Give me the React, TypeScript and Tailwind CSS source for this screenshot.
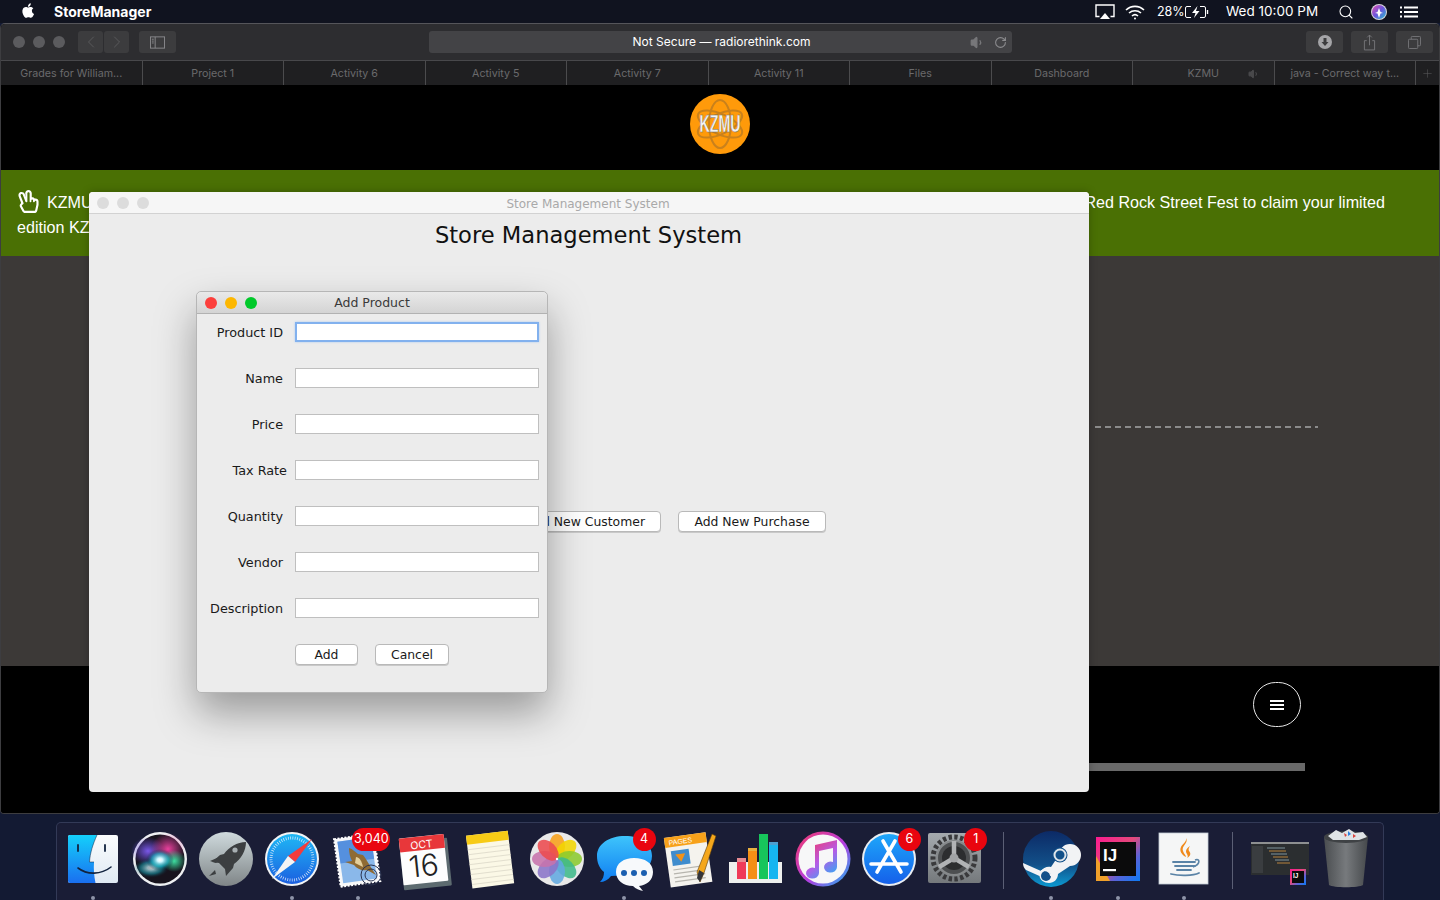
import React from "react";
import { FaRegHandPeace } from "react-icons/fa";
import { ChevronLeft, ChevronRight, Search, RotateCw, Volume1, Plus } from "lucide-react";

const tabs = ["Grades for William...", "Project 1", "Activity 6", "Activity 5", "Activity 7", "Activity 11", "Files", "Dashboard", "KZMU", "java - Correct way t..."];

const Svg = ({ children }: { children: React.ReactNode }) => (
  <svg viewBox="0 0 66 66" width="66" height="66" className="block">{children}</svg>
);

const Finder = () => (
  <Svg>
    <defs>
      <linearGradient id="fa" x1="0" y1="0" x2="0" y2="1"><stop offset="0" stopColor="#14d0fb" /><stop offset="1" stopColor="#1a6ff0" /></linearGradient>
      <linearGradient id="fb" x1="0" y1="0" x2="0" y2="1"><stop offset="0" stopColor="#fbfcfd" /><stop offset="1" stopColor="#dfe9f3" /></linearGradient>
    </defs>
    <rect x="8" y="9" width="50" height="48" rx="2" fill="url(#fb)" />
    <path d="M10 9H37C33 18 30 27 29.5 36H34C33.5 43 34 50 35.5 57H10a2 2 0 0 1-2-2V11a2 2 0 0 1 2-2z" fill="url(#fa)" />
    <path d="M18 19v6M45 19v6" stroke="#12233f" strokeWidth="1.8" strokeLinecap="round" />
    <path d="M18 42c9 7 23 7 33-1" stroke="#12233f" strokeWidth="1.6" fill="none" strokeLinecap="round" />
    <path d="M37 9C33 18 30 27 29.5 36H34" stroke="#12233f" strokeWidth="1" fill="none" opacity="0.5" />
  </Svg>
);

const Siri = () => (
  <Svg>
    <defs>
      <radialGradient id="sa"><stop offset="0" stopColor="#ffffff" /><stop offset="0.2" stopColor="#c8f6ff" /><stop offset="0.6" stopColor="#16b6c8" stopOpacity="0.65" /><stop offset="1" stopColor="#0a1a2a" stopOpacity="0" /></radialGradient>
      <radialGradient id="sb"><stop offset="0" stopColor="#e8409c" /><stop offset="1" stopColor="#e0409c" stopOpacity="0" /></radialGradient>
      <radialGradient id="sc"><stop offset="0" stopColor="#7a58e8" /><stop offset="1" stopColor="#6a4ee0" stopOpacity="0" /></radialGradient>
      <radialGradient id="sd"><stop offset="0" stopColor="#3ce0a0" /><stop offset="1" stopColor="#3ce0a0" stopOpacity="0" /></radialGradient>
    </defs>
    <circle cx="34" cy="33" r="27" fill="#eef0f2" />
    <circle cx="34" cy="33" r="24.5" fill="#17131d" />
    <ellipse cx="22" cy="25" rx="17" ry="14" fill="url(#sc)" />
    <ellipse cx="42" cy="23" rx="17" ry="16" fill="url(#sb)" />
    <ellipse cx="48" cy="35" rx="12" ry="11" fill="url(#sd)" />
    <ellipse cx="25" cy="42" rx="18" ry="10" fill="url(#sa)" opacity="0.7" />
    <ellipse cx="34" cy="34" rx="14" ry="11" fill="url(#sa)" />
  </Svg>
);

const Launchpad = () => (
  <Svg>
    <defs><linearGradient id="la" x1="0" y1="0" x2="0" y2="1"><stop offset="0" stopColor="#cfdadd" /><stop offset="1" stopColor="#7f8587" /></linearGradient></defs>
    <circle cx="33" cy="33" r="27" fill="url(#la)" />
    <path d="M53 16c-9 0-17 5-22 12l-4 1-8 7 7 1 6 6 1 7 7-8 1-4c7-5 12-13 12-22z" fill="#3c3f41" />
    <path d="M28 33l-4-1-7 3 6 2zM22 44l-6 6 7-2z" fill="#3c3f41" />
    <circle cx="42" cy="24" r="2.6" fill="#a7afb2" />
  </Svg>
);

const SafariIcon = () => (
  <Svg>
    <defs><linearGradient id="ca" x1="0" y1="0" x2="0" y2="1"><stop offset="0" stopColor="#1fb8f5" /><stop offset="1" stopColor="#1b5fe0" /></linearGradient></defs>
    <circle cx="33" cy="33" r="27" fill="#f2f4f5" />
    <circle cx="33" cy="33" r="25" fill="url(#ca)" />
    <circle cx="33" cy="33" r="21" fill="none" stroke="#fff" strokeWidth="3" strokeDasharray="0.7 1.6" opacity="0.85" />
    <path d="M53 13L29 30l7 6z" fill="#f23c3c" />
    <path d="M13 53l16-23 7 6z" fill="#f4f4f4" />
  </Svg>
);

const Mail = () => (
  <Svg>
    <g transform="rotate(-8 33 33)">
      <rect x="12" y="10" width="40" height="48" fill="#f6f7f8" stroke="#fff" strokeDasharray="2 1.5" strokeWidth="2" />
      <rect x="15" y="13" width="34" height="42" fill="#8ab8ea" />
      <path d="M15 13h34v22H15z" fill="#3f7fd8" opacity="0.7" />
    </g>
    <path d="M24 22c4 1 6 4 9 6l5 1c4 5 8 13 13 20l-9-5c-5 1-10-1-13-5l-9-3 7-1c-2-4-3-8-3-13z" fill="#8f6b34" />
    <path d="M31 31c3 0 6 4 7 10l-8-4z" fill="#e3cf9c" />
    <circle cx="46" cy="49" r="10" fill="none" stroke="#2a3350" strokeWidth="1" />
    <circle cx="46" cy="49" r="6" fill="none" stroke="#2a3350" strokeWidth="1" />
  </Svg>
);

const Calendar = () => (
  <Svg>
    <g transform="rotate(-6 33 33)">
      <rect x="9" y="14" width="48" height="48" rx="1" fill="#5d6b70" />
      <rect x="9" y="10" width="45" height="47" rx="1" fill="#fdfdfd" />
      <rect x="9" y="10" width="45" height="14" fill="#e8373a" />
      <text x="31" y="22" textAnchor="middle" fontFamily="Inter, sans-serif" fontSize="10.5" fill="#fff">OCT</text>
      <text x="31" y="50" textAnchor="middle" fontFamily="Inter, sans-serif" fontWeight="300" fontSize="30" fill="#222">16</text>
    </g>
  </Svg>
);

const Notes = () => (
  <Svg>
    <g transform="rotate(-7 33 33)">
      <rect x="11" y="7" width="42" height="53" fill="#fbf8e6" />
      <rect x="11" y="7" width="42" height="9" fill="#f7cb16" />
      {[21, 26, 31, 36, 41, 46, 51, 56].map((y) => <path key={y} d={`M11 ${y}H53`} stroke="#dcd9c9" strokeWidth="0.8" />)}
    </g>
  </Svg>
);

const Photos = () => {
  const cs = ["#f7a11a", "#f3d500", "#8bc92f", "#3fb98a", "#62a8e0", "#8a74c8", "#c773ac", "#ec4a4e"];
  return (
    <Svg>
      <circle cx="33" cy="33" r="27" fill="#e9e9e9" />
      {cs.map((c, i) => (
        <ellipse key={c} cx="33" cy="20.5" rx="8" ry="12.5" fill={c} opacity="0.88" transform={`rotate(${i * 45} 33 33)`} />
      ))}
      <circle cx="33" cy="33" r="1.2" fill="#fff" />
    </Svg>
  );
};

const Messages = () => (
  <Svg>
    <defs><linearGradient id="ma" x1="0" y1="0" x2="0" y2="1"><stop offset="0" stopColor="#3ec4fb" /><stop offset="1" stopColor="#0f7df2" /></linearGradient></defs>
    <path d="M34 10c16 0 27 8 27 20 0 10-9 18-20 19L20 50c-3 4-7 6-11 6 3-3 4-6 4-10C8 42 6 36 6 30 6 18 18 10 34 10z" fill="url(#ma)" />
    <path d="M43 32c11 0 19 5 19 14 0 8-6 13-14 14l4 5c-4-1-7-2-10-5-10 0-17-6-17-14 0-9 8-14 18-14z" fill="#f7f9fb" />
    <circle cx="33" cy="47" r="3" fill="#1b5fb0" /><circle cx="43" cy="47" r="3" fill="#1b5fb0" /><circle cx="53" cy="47" r="3" fill="#1b5fb0" />
  </Svg>
);

const Pages = () => (
  <Svg>
    <g transform="rotate(-8 30 33)">
      <rect x="10" y="9" width="42" height="50" fill="#f5f3ee" />
      <rect x="10" y="9" width="42" height="10" fill="#f7a11a" />
      <text x="14" y="17" fontFamily="'Liberation Sans', sans-serif" fontSize="7" fill="#fff">PAGES</text>
      <rect x="15" y="23" width="18" height="15" fill="#3f8ccd" />
      <path d="M19 27h10l-5 8z" fill="#f39218" />
      {[42, 46, 50, 54].map((y) => <path key={y} d={`M15 ${y}H46`} stroke="#b7b5ae" strokeWidth="1.2" />)}
    </g>
    <path d="M55 8l4 2-12 37-4 9-3-10z" fill="#f5a71c" stroke="#5b3a0a" strokeWidth="0.6" />
    <path d="M42 44l5 3-4 9-3-4z" fill="#34353a" />
  </Svg>
);

const Numbers = () => (
  <Svg>
    <path d="M6 36h53v21H6z" fill="#eef0ee" />
    <rect x="14" y="36" width="9" height="17" fill="#ef3a58" /><rect x="14" y="32" width="9" height="4" fill="#e88a92" />
    <rect x="25" y="25" width="9" height="28" fill="#f58f15" /><rect x="25" y="22" width="9" height="3" fill="#e8b040" />
    <rect x="36" y="8" width="9" height="45" fill="#17c55b" />
    <rect x="46" y="18" width="9" height="35" fill="#16b5f0" /><rect x="46" y="16" width="9" height="3" fill="#4d9fd0" />
  </Svg>
);

const ITunes = () => (
  <Svg>
    <defs>
      <linearGradient id="ia" x1="0" y1="0" x2="1" y2="1"><stop offset="0" stopColor="#f43a6a" /><stop offset="0.55" stopColor="#b53ee0" /><stop offset="1" stopColor="#18b8f0" /></linearGradient>
      <linearGradient id="ib" x1="0" y1="0" x2="0.6" y2="1"><stop offset="0" stopColor="#f7345e" /><stop offset="0.6" stopColor="#b65be6" /><stop offset="1" stopColor="#4a9bf2" /></linearGradient>
    </defs>
    <circle cx="33" cy="33" r="27.5" fill="url(#ia)" />
    <circle cx="33" cy="33" r="24.5" fill="#f7f7f8" />
    <path d="M25 19l22-5v27a6.5 5.5 0 1 1-4-5V22l-14 3v22a6.5 5.5 0 1 1-4-5z" fill="url(#ib)" />
  </Svg>
);

const AppStore = () => (
  <Svg>
    <defs><linearGradient id="aa" x1="0" y1="0" x2="0" y2="1"><stop offset="0" stopColor="#1ea7fa" /><stop offset="1" stopColor="#1560ea" /></linearGradient></defs>
    <circle cx="33" cy="33" r="27" fill="#e9edf2" />
    <circle cx="33" cy="33" r="25" fill="url(#aa)" />
    <path d="M27 15l18 31M39 15L21 46M15 38h36" stroke="#fff" strokeWidth="3.6" strokeLinecap="round" fill="none" />
  </Svg>
);

const SysPrefs = () => (
  <Svg>
    <defs><linearGradient id="pa" x1="0" y1="0" x2="0" y2="1"><stop offset="0" stopColor="#a5aaae" /><stop offset="1" stopColor="#75797c" /></linearGradient></defs>
    <rect x="6" y="7" width="53" height="50" rx="2" fill="url(#pa)" />
    <circle cx="32" cy="32" r="21" fill="none" stroke="#3a3a3c" strokeWidth="5" strokeDasharray="3.4 2.4" />
    <circle cx="32" cy="32" r="17" fill="#4d4f51" stroke="#86898b" strokeWidth="2" />
    <circle cx="32" cy="32" r="12" fill="#2c2d2f" />
    <path d="M32 32V15M32 32L17 41M32 32L47 41" stroke="#b1b3b5" strokeWidth="4.5" />
    <circle cx="32" cy="32" r="4.5" fill="#a1a3a5" />
  </Svg>
);

const Steam = () => (
  <Svg>
    <defs><linearGradient id="ta" x1="0" y1="0" x2="0" y2="1"><stop offset="0" stopColor="#0c2a66" /><stop offset="0.6" stopColor="#125089" /><stop offset="1" stopColor="#0c9ad2" /></linearGradient></defs>
    <circle cx="33" cy="33" r="28" fill="url(#ta)" />
    <path d="M5 37l18 8c2-3 6-5 10-4l8-12a11 11 0 1 1 11 11l-12 8c0 5-4 9-9 9s-9-3-9.500-7L8 44c-2-2-3-4-3-7z" fill="#f2f3f5" />
    <circle cx="42" cy="29" r="7.500" fill="#125089" />
    <circle cx="42" cy="29" r="5.500" fill="none" stroke="#dfe5ea" strokeWidth="2" />
    <circle cx="28" cy="50" r="5" fill="#125089" /><path d="M23 45c4-2 9 0 10 5" fill="none" stroke="#f2f3f5" strokeWidth="1.400" />
  </Svg>
);

const IJ = () => (
  <Svg>
    <defs><linearGradient id="ja" x1="0" y1="0" x2="1" y2="1"><stop offset="0" stopColor="#fc1a8f" /><stop offset="0.45" stopColor="#e34a7c" /><stop offset="0.7" stopColor="#5a63d8" /><stop offset="1" stopColor="#0a7bf5" /></linearGradient></defs>
    <rect x="11" y="11" width="44" height="44" fill="url(#ja)" />
    <path d="M11 30v25h14z" fill="#f0a02a" />
    <rect x="15" y="16" width="36" height="34" fill="#0b0b0c" />
    <text x="18" y="35" fontFamily="'Liberation Sans', sans-serif" fontWeight="700" fontSize="17" fill="#fff">IJ</text>
    <rect x="18" y="43" width="13" height="2.200" fill="#fff" />
  </Svg>
);

const Java = () => (
  <Svg>
    <rect x="8" y="7" width="49" height="51" fill="#f5f6f6" stroke="#c4cdd6" strokeWidth="0.8" />
    <path d="M35 12c3 5-5 8-3 13 1 3 3 4 3 6-4-2-7-6-5-10 1-3 6-5 5-9z" fill="#f08a1c" />
    <path d="M39 20c-4 3-5 5-3 8 1 2 1 3 0 4 4-2 4-5 2-7-1-2 0-3 1-5z" fill="#f08a1c" />
    <path d="M22 36h22M24 40h20M26 44h14M20 48c8 2 22 2 28-1" stroke="#5a83a6" strokeWidth="1.800" fill="none" strokeLinecap="round" />
    <path d="M44 34c5-2 6 4-2 7" stroke="#5a83a6" strokeWidth="1.600" fill="none" />
  </Svg>
);

const Thumb = () => (
  <Svg>
    <rect x="4" y="16" width="58" height="33" fill="#2b2e30" />
    <rect x="4" y="16" width="58" height="2" fill="#8e9091" />
    <rect x="5" y="20" width="11" height="27" fill="#3a3d40" />
    {[22, 25, 28, 31, 34, 37].map((y, i) => <path key={y} d={`M${20 + i * 2} ${y}h${18 - i}`} stroke={i % 2 ? "#c98c3f" : "#8aa0a8"} strokeWidth="0.9" />)}
    <rect x="43" y="43" width="16" height="16" fill="url(#ja)" />
    <rect x="45" y="45" width="12" height="12" fill="#0b0b0c" />
    <text x="46" y="52" fontFamily="'Liberation Sans', sans-serif" fontWeight="700" fontSize="6.500" fill="#fff">IJ</text>
  </Svg>
);

const Trash = () => (
  <Svg>
    <defs><linearGradient id="ra" x1="0" y1="0" x2="1" y2="0"><stop offset="0" stopColor="#4a4d50" /><stop offset="0.5" stopColor="#777a7d" /><stop offset="1" stopColor="#45484b" /></linearGradient></defs>
    <path d="M11 11h44l-5 48c-4 3-30 3-34 0z" fill="url(#ra)" />
    <ellipse cx="33" cy="11" rx="22" ry="6" fill="#3f4245" />
    <path d="M15 10l8-6 6 3 7-4 6 4 8-1 4 5-8 3H20z" fill="#dfe3e6" />
    <path d="M31 7l3 2-2 2zM40 8l3 2-3 2z" fill="#d9423c" />
    <path d="M35 5l3 3-3 2z" fill="#2d7fe0" />
  </Svg>
);

const dock: { el: React.ReactNode; dot?: boolean; badge?: string; sep?: boolean; wide?: boolean }[] = [
  { el: <Finder />, dot: true },
  { el: <Siri /> },
  { el: <Launchpad /> },
  { el: <SafariIcon />, dot: true },
  { el: <Mail />, dot: true, badge: "3,040", wide: true },
  { el: <Calendar /> },
  { el: <Notes /> },
  { el: <Photos /> },
  { el: <Messages />, dot: true, badge: "4" },
  { el: <Pages /> },
  { el: <Numbers /> },
  { el: <ITunes /> },
  { el: <AppStore />, badge: "6" },
  { el: <SysPrefs />, badge: "1" },
  { sep: true, el: null },
  { el: <Steam />, dot: true },
  { el: <IJ />, dot: true },
  { el: <Java />, dot: true },
  { sep: true, el: null },
  { el: <Thumb /> },
  { el: <Trash /> },
];

const ToolBtn = ({ children, w = "w-[37px]" }: { children: React.ReactNode; w?: string }) => (
  <div className={`${w} h-[22px] rounded-[3px] bg-[#3c3c3e] flex items-center justify-center`}>{children}</div>
);

const Row = ({ label, focus, shift }: { label: string; focus?: boolean; shift?: boolean }) => (
  <div className="h-[46px] flex">
    <div className={`w-[79px] h-[20px] flex items-center justify-end pt-[2px] text-[12.800px] text-[#1a1a1a] whitespace-nowrap ${shift ? "" : "pr-[4px]"}`}>{label}</div>
    <div className={`ml-[8px] w-[244px] h-[20px] bg-white ${focus ? "border-2 border-[#82b1ee] shadow-[0_0_2px_#a9c9f3]" : "border border-[#bfbfbf]"}`} />
  </div>
);

const JBtn = ({ children, w }: { children: React.ReactNode; w: string }) => (
  <div className={`${w} h-[21px] bg-white rounded-[4px] border border-[#b9b9b9] shadow-[0_1px_0_#c9c9c9] flex items-center justify-center pt-[2px] text-[12.400px] text-[#1a1a1a] whitespace-nowrap`}>{children}</div>
);

export default function App() {
  return (
    <div className="w-[1440px] h-[900px] overflow-hidden bg-[#131a33] flex flex-col relative font-['Inter',sans-serif]">
      {/* menu bar */}
      <div className="h-[23px] shrink-0 bg-[#10131f] text-white flex items-center pl-[21px] pr-[22px] text-[14px]">
        <svg viewBox="0 0 20 24" width="14" height="17" fill="#fff" className="-mt-[2px]">
          <path d="M15.500 12.600c0-2.500 2-3.600 2.100-3.700-1.200-1.700-3-1.900-3.600-2-1.500-.2-3 .9-3.800.9s-2-.9-3.300-.9C5.200 7 3.600 8 2.800 9.500c-1.800 3.100-.5 7.700 1.300 10.200.9 1.200 1.900 2.600 3.200 2.600 1.300-.1 1.800-.8 3.400-.8s2 .8 3.400.8 2.300-1.300 3.100-2.500c1-1.400 1.400-2.800 1.400-2.900-.1 0-2.900-1.100-3-4.300zM13 5.100c.7-.9 1.200-2.100 1-3.300-1 .1-2.300.7-3 1.600-.7.800-1.200 2-1.100 3.200 1.200.1 2.400-.6 3.100-1.500z" />
        </svg>
        <span className="ml-[19px] font-bold text-[14px] whitespace-nowrap">StoreManager</span>
        <div className="flex-1" />
        <svg viewBox="0 0 20 16" width="20" height="16" className="mr-[10px]" fill="none" stroke="#fff" strokeWidth="1.400">
          <path d="M4.500 12.500H1V1h18v11.500h-3.500" /><path d="M10 9l5 6H5z" fill="#fff" stroke="none" />
        </svg>
        <svg viewBox="0 0 20 16" width="20" height="16" fill="none" stroke="#fff" strokeWidth="1.600" className="mr-[12px]">
          <path d="M1 6a13 13 0 0 1 18 0M4 9a9 9 0 0 1 12 0M7 12a4.500 4.500 0 0 1 6 0" /><circle cx="10" cy="14.500" r="1" fill="#fff" stroke="none" />
        </svg>
        <span className="text-[12.500px] w-[28px] whitespace-nowrap pt-[1px]">28%</span>
        <svg viewBox="0 0 24 12" width="24" height="12" fill="none" stroke="#fff" strokeWidth="1" className="mr-[17px]">
          <path d="M6 .5H2A1.500 1.500 0 0 0 .5 2v8A1.500 1.500 0 0 0 2 11.500h4M15 .5h4A1.500 1.500 0 0 1 20.500 2v8a1.500 1.500 0 0 1-1.500 1.500h-4" /><path d="M12.500 0L7 7h3.500L9 12l5.500-7H11z" fill="#fff" stroke="none" /><path d="M22.500 4v4" strokeWidth="1.400" />
        </svg>
        <span className="text-[13.500px] w-[93px] whitespace-nowrap">Wed 10:00 PM</span>
        <Search size={16} strokeWidth={1.600} className="ml-[19px]" />
        <svg viewBox="0 0 16 16" width="16" height="16" className="ml-[17px]">
          <defs>
            <linearGradient id="mb" x1="0" y1="0" x2="1" y2="1"><stop offset="0" stopColor="#e64fb0" /><stop offset="0.5" stopColor="#6a55dd" /><stop offset="1" stopColor="#27c1cf" /></linearGradient>
          </defs>
          <circle cx="8" cy="8" r="8" fill="#d8d8dd" /><circle cx="8" cy="8" r="7" fill="url(#mb)" /><path d="M8 4l1.500 4 2.500 1-2.500.5L8 14 6.500 9.500 4 9l2.500-1z" fill="#fff" />
        </svg>
        <svg viewBox="0 0 18 12" width="18" height="12" className="ml-[13px]" fill="#fff">
          <rect x="0" y="0.500" width="2" height="2" /><rect x="4" y="0.500" width="14" height="2" />
          <rect x="0" y="5" width="2" height="2" /><rect x="4" y="5" width="14" height="2" />
          <rect x="0" y="9.500" width="2" height="2" /><rect x="4" y="9.500" width="14" height="2" />
        </svg>
      </div>

      {/* browser window */}
      <div className="h-[791px] shrink-0 rounded-t-[5px] rounded-b-[4px] border border-[#3d3d40] border-t-[#55555a] flex flex-col overflow-hidden bg-black">
        <div className="h-[37px] shrink-0 bg-[#2d2d30] flex items-center pl-[12px] pr-[6px] border-b border-[#48484b]">
          <div className="w-[12px] h-[12px] rounded-full bg-[#5b5b5e]" />
          <div className="ml-[8px] w-[12px] h-[12px] rounded-full bg-[#5b5b5e]" />
          <div className="ml-[8px] w-[12px] h-[12px] rounded-full bg-[#5b5b5e]" />
          <div className="ml-[13px] flex gap-[1px]">
            <ToolBtn w="w-[25px]"><ChevronLeft size={20} strokeWidth={1} className="text-[#5f5f62]" /></ToolBtn>
            <ToolBtn w="w-[25px]"><ChevronRight size={20} strokeWidth={1} className="text-[#5f5f62]" /></ToolBtn>
          </div>
          <div className="ml-[10px]">
            <ToolBtn>
              <svg viewBox="0 0 16 13" width="15" height="13" fill="none" stroke="#8a8a8d" strokeWidth="1"><rect x="0.500" y="0.500" width="15" height="12" /><path d="M5.500 0.500v12" /><path d="M2 3h2M2 5h2M2 7h2" /></svg>
            </ToolBtn>
          </div>
          <div className="ml-[253px] w-[583px] h-[22px] rounded-[3px] bg-[#434346] flex items-center relative">
            <div className="flex-1 text-center text-[12px] text-white pl-[2px]"><span>Not Secure — radiorethink.com</span></div>
            <Volume1 size={15} className="absolute left-[541px] text-[#77777a]" fill="#77777a" />
            <RotateCw size={13} className="absolute left-[565px] text-[#8c8c8f]" />
          </div>
          <div className="flex-1" />
          <div className="flex gap-[8px]">
            <ToolBtn>
              <svg viewBox="0 0 14 14" width="14" height="14"><circle cx="7" cy="7" r="7" fill="#a5a5a8" /><path d="M5.500 3h3v4h2L7 11 3.500 7h2z" fill="#3c3c3e" /></svg>
            </ToolBtn>
            <ToolBtn>
              <svg viewBox="0 0 14 18" width="13" height="17" fill="none" stroke="#77777a" strokeWidth="1"><path d="M4 7H1.500v10h11V7H10M7 12V1M4.500 3.500L7 1l2.500 2.500" /></svg>
            </ToolBtn>
            <ToolBtn>
              <svg viewBox="0 0 14 14" width="13" height="13" fill="none" stroke="#77777a" strokeWidth="1"><rect x="0.500" y="3.500" width="10" height="10" rx="1" /><path d="M3.500 3.500v-2a1 1 0 0 1 1-1h8a1 1 0 0 1 1 1v8a1 1 0 0 1-1 1h-2" /></svg>
            </ToolBtn>
          </div>
        </div>
        <div className="h-[24px] shrink-0 bg-[#1f1f21] flex items-center">
          {tabs.map((t, i) => (
            <div key={t} className={`flex-1 h-full min-w-0 border-r border-[#4b4b4d] flex items-center justify-center pt-[2px] text-[10.700px] text-[#6a6a6c] whitespace-nowrap relative ${i === 8 ? "bg-[#242426]" : ""}`}>
              {t}
              {i === 8 && <Volume1 size={12} className="absolute right-[14px] text-[#49494b]" fill="#49494b" />}
            </div>
          ))}
          <div className="w-[23px] shrink-0 flex items-center justify-center"><Plus size={13} strokeWidth={1} className="text-[#5a5a5c]" /></div>
        </div>

        {/* page */}
        <div className="flex-1 flex flex-col relative min-h-0">
          <div className="h-[85px] shrink-0 bg-black flex items-start justify-center pt-[9px]">
            <svg viewBox="0 0 60 60" width="60" height="60">
              <circle cx="30" cy="30" r="30" fill="#ff9a0a" />
              <g fill="none" stroke="#c9811c" strokeWidth="2">
                <ellipse cx="30" cy="30" rx="11" ry="24" />
                <ellipse cx="30" cy="30" rx="24" ry="10" transform="rotate(25 30 30)" />
                <ellipse cx="30" cy="30" rx="24" ry="10" transform="rotate(-25 30 30)" />
              </g>
              <g transform="translate(30 38) scale(0.62 1)">
                <text x="0" y="0" textAnchor="middle" fontFamily="'Liberation Sans', sans-serif" fontWeight="700" fontSize="23" fill="#f4f4f4" stroke="#6a6a6a" strokeWidth="0.4">KZMU</text>
              </g>
            </svg>
          </div>
          <div className="h-[86px] shrink-0 bg-[#4a7004] text-white text-[16.100px] pl-[16px] pr-[54px] pt-[20px] leading-[25px] font-['Liberation_Sans',sans-serif]">
            <div className="flex items-center">
              <FaRegHandPeace className="text-[23px] mr-[7px] -mt-[3px] shrink-0" />
              <span>KZMU</span>
              <div className="flex-1" />
              <span className="whitespace-nowrap">Red Rock Street Fest to claim your limited</span>
            </div>
            <div>edition KZMU</div>
          </div>
          <div className="h-[410px] shrink-0 bg-[#3c3937] flex justify-end items-start pt-[170px] pr-[121px]">
            <div className="w-[223px] h-[2px] bg-[repeating-linear-gradient(90deg,#8b8b8b_0_6px,transparent_6px_10px)]" />
          </div>
          <div className="flex-1 bg-black flex flex-col items-end pr-[134px]">
            <div className="mt-[16px] mr-[4px] w-[48px] h-[45px] rounded-full border border-[#e6e6e6] flex flex-col items-center justify-center gap-[2px]">
              <div className="w-[14px] h-[2px] bg-white" /><div className="w-[14px] h-[2px] bg-white" /><div className="w-[14px] h-[2px] bg-white" />
            </div>
            <div className="mt-[36px] w-[300px] h-[8px] bg-[#696969]" />
          </div>

          {/* Store Management window */}
          <div className="absolute left-[88px] top-[107px] w-[1000px] h-[600px] rounded-[4px] bg-[#ececec] overflow-hidden font-['DejaVu_Sans',sans-serif] flex flex-col shadow-[0_0_8px_rgba(0,0,0,0.25)]">
            <div className="h-[22px] shrink-0 bg-[#f6f6f6] border-b border-[#d2d2d2] flex items-center pl-[8px] relative">
              <div className="w-[12px] h-[12px] rounded-full bg-[#dcdcdc]" />
              <div className="ml-[8px] w-[12px] h-[12px] rounded-full bg-[#dcdcdc]" />
              <div className="ml-[8px] w-[12px] h-[12px] rounded-full bg-[#dcdcdc]" />
              <div className="flex-1 -ml-[54px] text-center text-[12px] text-[#a9a9a9] pr-[8px] pt-[3px]">Store Management System</div>
            </div>
            <div className="h-[42px] text-center text-[22.600px] text-[#111] leading-[42px] pr-[1px]">Store Management System</div>
            <div className="mt-[255px] flex items-start pl-[400px] gap-[17px]">
              <div className="w-[172px] h-[21px] bg-white rounded-[4px] border border-[#b9b9b9] shadow-[0_1px_0_#c9c9c9] flex items-center justify-end pt-[2px] pr-[15px] text-[12.400px] text-[#1a1a1a] whitespace-nowrap">Add New Customer</div>
              <JBtn w="w-[148px]">Add New Purchase</JBtn>
            </div>
          </div>

          {/* Add Product dialog */}
          <div className="absolute left-[195px] top-[206px] w-[352px] h-[402px] rounded-[5px] bg-[#ececec] border border-[#b6b6b6] font-['DejaVu_Sans',sans-serif] shadow-[0_20px_40px_rgba(0,0,0,0.35)] flex flex-col">
            <div className="h-[22px] shrink-0 rounded-t-[5px] bg-gradient-to-b from-[#e9e9e9] to-[#d4d4d4] border-b border-[#b2b2b2] flex items-center pl-[8px] relative">
              <div className="w-[12px] h-[12px] rounded-full bg-[#fc3f3c]" />
              <div className="ml-[8px] w-[12px] h-[12px] rounded-full bg-[#fdb700]" />
              <div className="ml-[8px] w-[12px] h-[12px] rounded-full bg-[#00c92a]" />
              <div className="flex-1 -ml-[60px] pt-[1px] text-center text-[12.500px] text-[#3a3a3a]">Add Product</div>
            </div>
            <div className="pl-[11px] pt-[8px]">
              <Row label="Product ID" focus />
              <Row label="Name" />
              <Row label="Price" />
              <Row label="Tax Rate" shift />
              <Row label="Quantity" />
              <Row label="Vendor" />
              <Row label="Description" />
              <div className="flex ml-[87px] gap-[17px]">
                <JBtn w="w-[63px]">Add</JBtn>
                <JBtn w="w-[74px]">Cancel</JBtn>
              </div>
            </div>
          </div>
        </div>
      </div>

      {/* dock */}
      <div className="flex-1 flex justify-center items-start pt-[8px]">
        <div className="w-[1328px] h-[80px] rounded-t-[5px] border border-[#333a57] border-b-0 bg-[#1a1d36] pl-[3px] flex items-start">
          {dock.map((d, i) =>
            d.sep ? (
              <div key={i} className="w-[29.700px] shrink-0 flex justify-center pt-[9px]"><div className="w-px h-[57px] bg-[#5b5f75]" /></div>
            ) : (
              <div key={i} className="w-[66.330px] shrink-0 relative h-[78px] flex justify-center pt-[3px]">
                {d.el}
                {d.badge && (
                  <div className={`absolute top-[5px] h-[23px] rounded-full bg-[#e9050f] text-white text-[12.500px] flex items-center justify-center ${d.wide ? "left-[27px] w-[38px]" : "left-[42px] w-[23px]"}`}>{d.badge}</div>
                )}
                {d.dot && <div className="absolute left-[31px] bottom-[1px] w-[4px] h-[4px] rounded-full bg-[#8e94a8]" />}
              </div>
            )
          )}
        </div>
      </div>
    </div>
  );
}
